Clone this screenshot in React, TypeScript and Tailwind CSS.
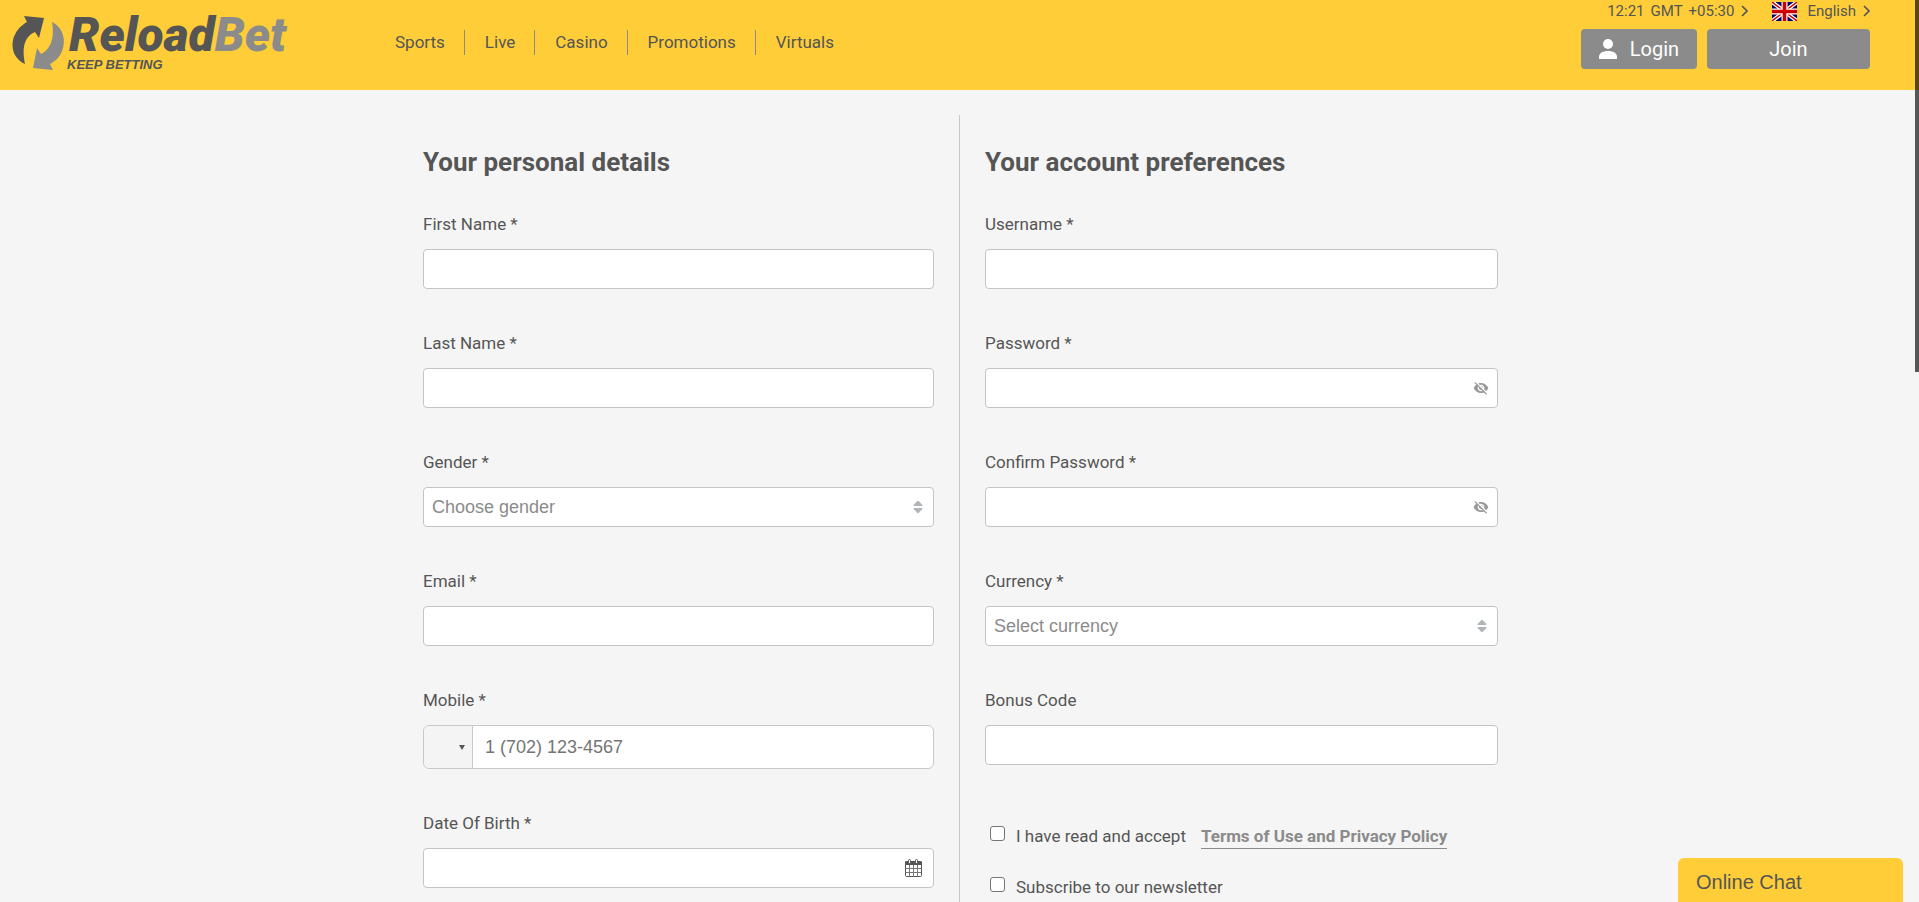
import { ReactNode } from 'react';
import { MdVisibilityOff } from 'react-icons/md';
import { FaSort } from 'react-icons/fa';

const NAV_ITEMS = ['Sports', 'Live', 'Casino', 'Promotions', 'Virtuals'];

const inputClass = 'block h-10 w-full rounded border border-[#c4c4c4] bg-white px-2 text-lg text-[#555] outline-none focus:border-[#8b8b8b]';

function Logo() {
  return (
    <a href="#" className="flex items-start gap-[3px] pl-3" aria-label="ReloadBet">
      <svg width="52" height="56" viewBox="0 0 52 56" className="mt-[15px]" aria-hidden="true">
        <path fill="#555" d="M12 1 L32 3 L27 23 L23 17 C14 21 9 30 13 49 C3 44 -1 35 1 25 C3 17 8 11 15 7 Z" />
        <path fill="#8b8b8b" d="M40 7 C49 11 54 22 51 33 C49 41 44 46 38 49 L41 55 L21 53 L25 33 L29 39 C38 35 43 24 40 7 Z" />
      </svg>
      <span className="flex flex-col pt-3 italic">
        <span className="pl-0.5 text-5xl leading-[46px] font-black text-[#555]">
          Reload<span className="text-[#8b8b8b]">Bet</span>
        </span>
        <span className="font-['Liberation_Sans',sans-serif] text-[13px] leading-[14px] font-bold text-[#555]">KEEP BETTING</span>
      </span>
    </a>
  );
}

function Chevron() {
  return (
    <svg width="7" height="12" viewBox="0 0 7 12" fill="none" stroke="#555" strokeWidth="1.6" aria-hidden="true">
      <path d="M1 1 L6 6 L1 11" />
    </svg>
  );
}

function UkFlag() {
  return (
    <svg width="25" height="19" viewBox="0 0 25 19" aria-hidden="true">
      <rect width="25" height="19" fill="#006" />
      <path d="M0 0 L25 19 M25 0 L0 19" stroke="#fff" strokeWidth="4" />
      <path d="M0 0 L25 19 M25 0 L0 19" stroke="#c00" strokeWidth="1.4" />
      <path d="M12.5 0 V19 M0 9.5 H25" stroke="#fff" strokeWidth="6" />
      <path d="M12.5 0 V19 M0 9.5 H25" stroke="#c00" strokeWidth="3.6" />
    </svg>
  );
}

function PersonIcon() {
  return (
    <svg width="18" height="20" viewBox="0 0 18 20" fill="#fff" aria-hidden="true">
      <circle cx="9" cy="5" r="5" />
      <path d="M0 20 V18 C0 14 4 12 9 12 C14 12 18 14 18 18 V20 Z" />
    </svg>
  );
}

function CalendarIcon() {
  return (
    <svg width="17" height="18" viewBox="0 0 17 18" aria-hidden="true">
      <rect x="0.5" y="2.5" width="16" height="15" rx="1" fill="#fff" stroke="#555" />
      <path d="M0 2.5 H17 V6 H0 Z" fill="#555" />
      <path d="M0.5 9.5 H16.5 M0.5 13.5 H16.5 M4.5 6 V17.5 M8.5 6 V17.5 M12.5 6 V17.5" stroke="#777" />
      <rect x="3.5" y="0.5" width="2" height="4" rx="1" fill="#fff" stroke="#555" />
      <rect x="10.5" y="0.5" width="2" height="4" rx="1" fill="#fff" stroke="#555" />
    </svg>
  );
}

function Field({ id, label, children }: { id: string; label: string; children?: ReactNode }) {
  return (
    <div className="flex flex-col gap-[13px]">
      <label htmlFor={id} className="text-[17px] leading-6">{label}</label>
      {children ?? <input id={id} type="text" className={inputClass} />}
    </div>
  );
}

function PasswordField({ id, label }: { id: string; label: string }) {
  return (
    <Field id={id} label={label}>
      <div className="relative">
        <input id={id} type="password" className={`${inputClass} pr-9`} />
        <button type="button" aria-label="Show password" className="absolute inset-y-0 right-[9px] text-[#999]">
          <MdVisibilityOff size={16} />
        </button>
      </div>
    </Field>
  );
}

function SelectField({ id, label, placeholder, options }: { id: string; label: string; placeholder: string; options: string[] }) {
  return (
    <Field id={id} label={label}>
      <div className="relative">
        <select id={id} defaultValue="" className="block h-10 w-full appearance-none rounded border border-[#c4c4c4] bg-white px-2 font-['Liberation_Sans',sans-serif] text-lg leading-6 text-[#8b8b8b] outline-none">
          <option value="">{placeholder}</option>
          {options.map((option) => <option key={option}>{option}</option>)}
        </select>
        <span className="pointer-events-none absolute inset-y-0 right-2 flex items-center text-[#b0b5ba]">
          <FaSort size={16} />
        </span>
      </div>
    </Field>
  );
}

function Checkbox({ id, children }: { id: string; children: ReactNode }) {
  return (
    <div className="flex items-start gap-[11px] pl-[5px] text-[17px] leading-6">
      <input id={id} type="checkbox" className="mt-0.5 size-[15px] shrink-0 appearance-none rounded-[3px] border border-[#767676] bg-white checked:bg-[#767676]" />
      <div className="flex gap-[15px]">{children}</div>
    </div>
  );
}

export default function App() {
  return (
    <div className="flex min-h-screen flex-col bg-[#f5f5f5] font-[Roboto,sans-serif] text-[#555]">
      <header className="flex h-[90px] items-start bg-[#fecd38]">
        <div className="w-[375px] shrink-0">
          <Logo />
        </div>
        <nav className="flex pt-[30px]">
          {NAV_ITEMS.map((item) => (
            <a key={item} href="#" className="border-l border-[#8b8b8b] pr-[19px] pl-5 text-[17px] leading-[25px] first:border-l-0">
              {item}
            </a>
          ))}
        </nav>
        <div className="ml-auto flex flex-col gap-2 pr-[49px]">
          <div className="flex h-[21px] items-end justify-end gap-6 text-[15px] leading-5">
            <button type="button" className="flex items-center gap-[7px]">
              <span className="flex gap-1.5">
                <span>12:21</span>
                <span>GMT</span>
                <span>+05:30</span>
              </span>
              <Chevron />
            </button>
            <button type="button" className="flex items-center gap-[7px]">
              <UkFlag />
              <span className="pl-[3px]">English</span>
              <Chevron />
            </button>
          </div>
          <div className="flex gap-[10px] text-xl text-white">
            <button type="button" className="flex h-10 w-[116px] items-center justify-center gap-[13px] rounded bg-[#8b8b8b]">
              <PersonIcon />
              Login
            </button>
            <button type="button" className="h-10 w-[163px] rounded bg-[#8b8b8b]">Join</button>
          </div>
        </div>
      </header>

      <main className="flex flex-1 flex-col pt-[25px] pl-0.5">
        <form className="mx-auto grid w-full max-w-[1075px] flex-1 grid-cols-[536fr_539fr]">
          <section className="pt-[31px] pr-[25px]">
            <h2 className="mb-[34px] text-[26px] leading-8 font-bold">Your personal details</h2>
            <div className="flex flex-col gap-[42px]">
              <Field id="first-name" label="First Name *" />
              <Field id="last-name" label="Last Name *" />
              <SelectField id="gender" label="Gender *" placeholder="Choose gender" options={['Male', 'Female']} />
              <Field id="email" label="Email *" />
              <Field id="mobile" label="Mobile *">
                <div className="flex h-11 rounded-md border border-[#c8c8c8] bg-white">
                  <button type="button" aria-label="Country code" className="flex w-[49px] items-center justify-end rounded-l-md border-r border-[#c8c8c8] bg-[#f4f4f4] pr-[7px]">
                    <svg width="6" height="5" viewBox="0 0 6 5" aria-hidden="true"><path d="M0 0 H6 L3 5 Z" fill="#555" /></svg>
                  </button>
                  <input id="mobile" type="tel" placeholder="1 (702) 123-4567" className="min-w-0 flex-1 rounded-r-md px-3 font-['Liberation_Sans',sans-serif] text-lg outline-none placeholder:text-[#757575]" />
                </div>
              </Field>
              <Field id="birth-date" label="Date Of Birth *">
                <div className="relative">
                  <input id="birth-date" type="text" className={`${inputClass} pr-10`} />
                  <button type="button" aria-label="Open calendar" className="absolute inset-y-0 right-3">
                    <CalendarIcon />
                  </button>
                </div>
              </Field>
            </div>
          </section>

          <section className="border-l border-[#c8c8c8] pt-[31px] pl-[25px]">
            <h2 className="mb-[34px] text-[26px] leading-8 font-bold">Your account preferences</h2>
            <div className="flex flex-col gap-[42px]">
              <Field id="username" label="Username *" />
              <PasswordField id="password" label="Password *" />
              <PasswordField id="confirm-password" label="Confirm Password *" />
              <SelectField id="currency" label="Currency *" placeholder="Select currency" options={['EUR', 'USD', 'GBP']} />
              <Field id="bonus-code" label="Bonus Code" />
            </div>
            <div className="mt-[59px] flex flex-col gap-[26px]">
              <Checkbox id="terms">
                <label htmlFor="terms">I have read and accept</label>
                <a href="#" className="h-[25px] border-b border-[#8b8b8b] font-bold text-[#8b8b8b]">Terms of Use and Privacy Policy</a>
              </Checkbox>
              <Checkbox id="newsletter">
                <label htmlFor="newsletter">Subscribe to our newsletter</label>
              </Checkbox>
            </div>
          </section>
        </form>
      </main>

      <button type="button" className="fixed right-4 bottom-0 w-[225px] rounded-t-md bg-[#fecd38] px-[18px] pt-2.5 pb-1.5 text-left font-['Liberation_Sans',sans-serif] text-xl leading-7">
        Online Chat
      </button>
      {/* scroll thumb */}
      <div className="fixed top-0 right-0 h-[372px] w-1 bg-black/65" />
    </div>
  );
}
